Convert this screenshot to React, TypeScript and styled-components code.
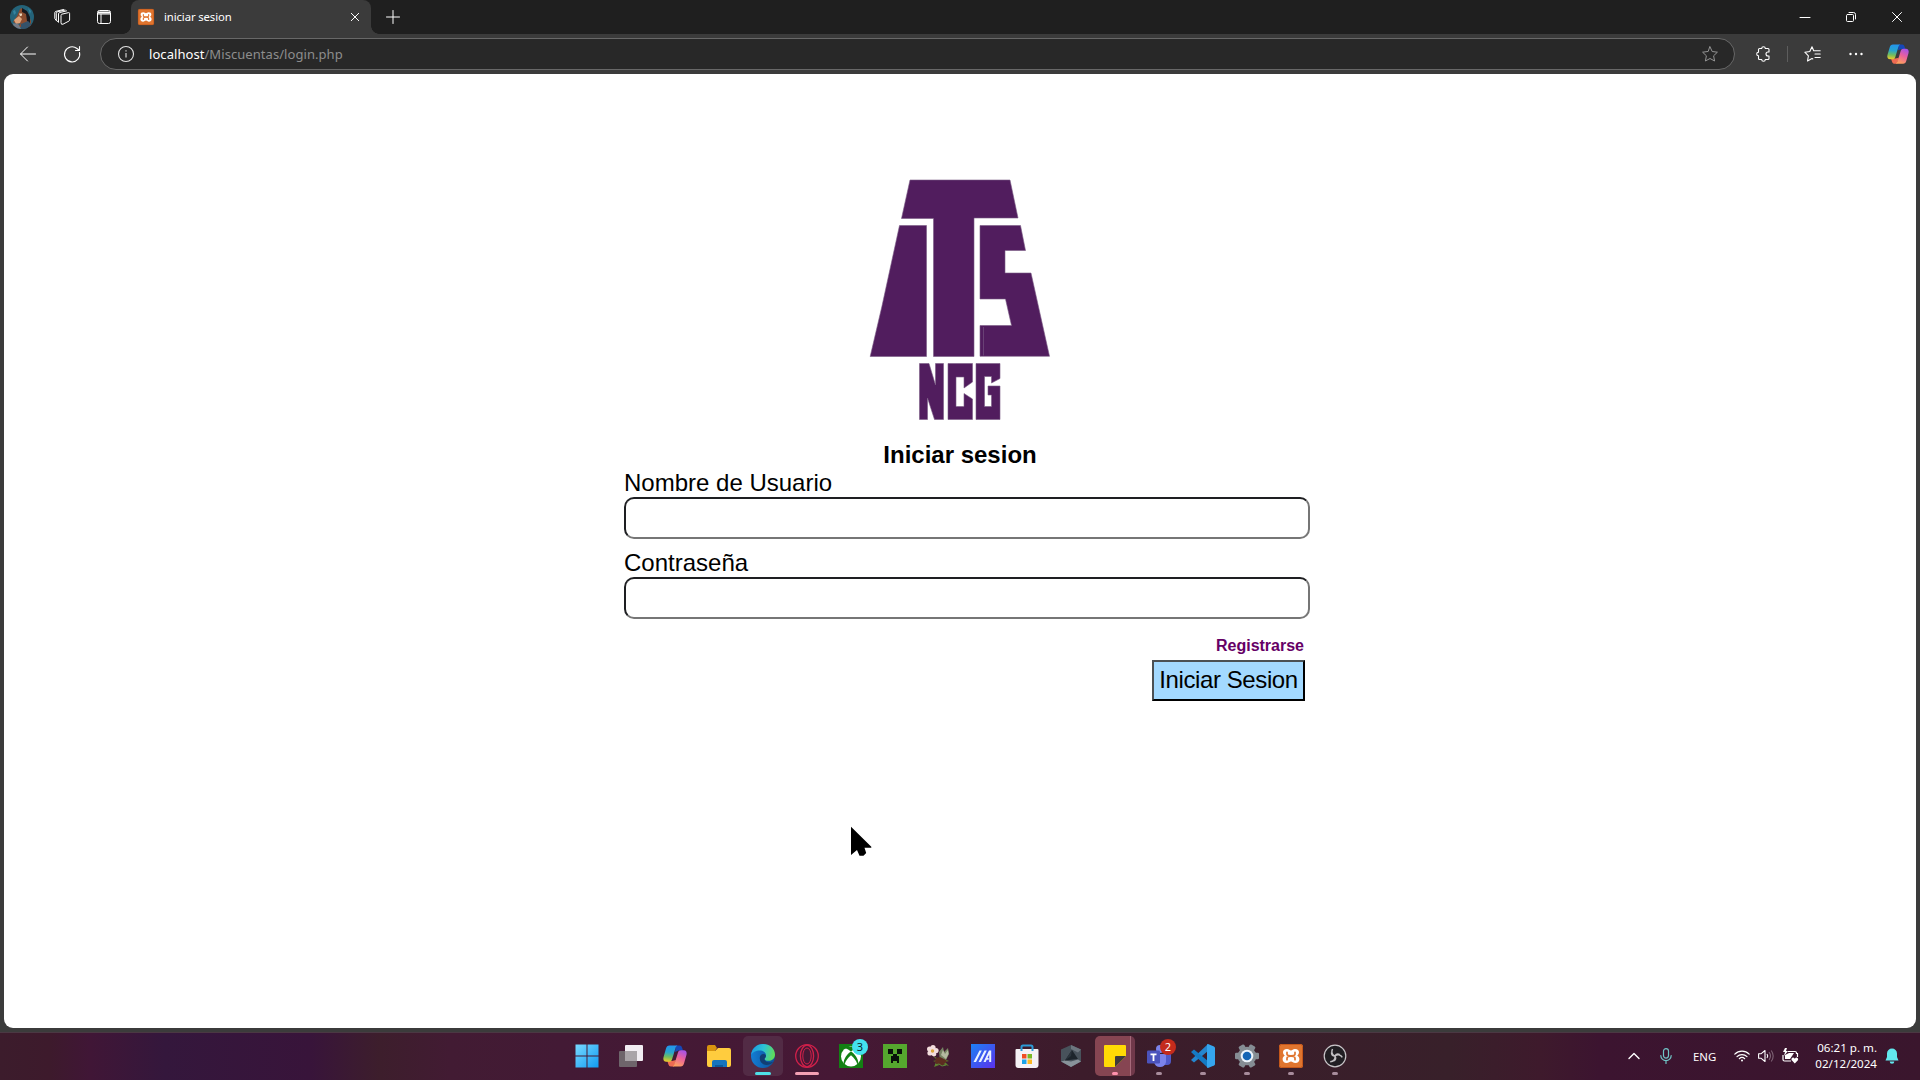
import React from "react";
import styled, { createGlobalStyle } from "styled-components";

const ui = '"Noto Sans", "Open Sans", sans-serif';

const Global = createGlobalStyle`
  * { box-sizing: border-box; }
  body { margin: 0; background: #3b3b3b; overflow: hidden; }
  svg { display: block; flex: none; overflow: visible; }
`;

const Desktop = styled.div`
  display: flex;
  flex-direction: column;
  width: 1920px;
  height: 1080px;
  background: #3b3b3b;
  font-family: ${ui};
`;

/* ---------- browser chrome ---------- */
const TabStrip = styled.header`
  display: flex;
  height: 34px;
  background: #1f1f1f;
  color: #fff;
`;
const StripTools = styled.div`
  display: flex;
  align-items: center;
  width: 131px;
  padding-left: 10px;
  gap: 20px;
`;
const Tab = styled.div`
  position: relative;
  display: flex;
  align-items: center;
  width: 240px;
  padding: 0 11px 0 7px;
  background: #3b3b3b;
  border-radius: 8px 8px 0 0;
  &::before, &::after {
    content: "";
    position: absolute;
    bottom: 0;
    width: 8px;
    height: 8px;
  }
  &::before { left: -8px; background: radial-gradient(circle at 0 0, #1f1f1f 7.5px, #3b3b3b 8px); }
  &::after { right: -8px; background: radial-gradient(circle at 100% 0, #1f1f1f 7.5px, #3b3b3b 8px); }
`;
const TabTitle = styled.span`
  flex: 1;
  margin-left: 10px;
  font-size: 11.3px;
  line-height: 16px;
  letter-spacing: -0.1px;
`;
const NewTab = styled.div`
  display: flex;
  align-items: center;
  flex: 1;
  padding-left: 14px;
`;
const WindowButtons = styled.div`
  display: flex;
  align-items: center;
  gap: 36px;
  padding-right: 18px;
`;
const Toolbar = styled.nav`
  display: flex;
  align-items: center;
  height: 40px;
  padding: 0 11px 0 20px;
  background: #3b3b3b;
  color: #fff;
`;
const NavButtons = styled.div`
  display: flex;
  align-items: center;
  gap: 27px;
  width: 80px;
`;
const Address = styled.div`
  display: flex;
  align-items: center;
  width: 1635px;
  height: 32px;
  padding: 0 16px 0 17px;
  border: 1px solid #686868;
  border-radius: 16px;
  background: #282828;
`;
const Url = styled.span`
  flex: 1;
  margin-left: 15px;
  font-size: 13px;
  line-height: 18px;
  letter-spacing: 0.06px;
  color: #8d8d8d;
  b { font-weight: 400; color: #fff; }
`;
const ToolbarActions = styled.div`
  display: flex;
  align-items: center;
  padding-left: 20px;
`;
const Divider = styled.i`
  width: 1px;
  height: 16px;
  margin: 0 16px;
  background: #5d5d5d;
`;
const MenuDots = styled.svg`
  margin: 0 23px 0 27px;
`;

/* ---------- page ---------- */
const Page = styled.main`
  display: flex;
  flex-direction: column;
  align-items: center;
  height: 954px;
  margin: 0 4px;
  padding-top: 106px;
  border-radius: 9px;
  background: #fff;
  color: #000;
  font-family: "Liberation Sans", Arial, sans-serif;
  font-size: 24px;
`;
const Title = styled.h1`
  margin: 21px 0 0;
  font-size: 24px;
  line-height: 28px;
`;
const Form = styled.form`
  display: flex;
  flex-direction: column;
  width: 672px;
`;
const Field = styled.label`
  display: flex;
  flex-direction: column;
  height: 80px;
  line-height: 28px;
`;
const Input = styled.input`
  width: 686px;
  height: 42px;
  border: 2px solid;
  border-color: #1e1f22 #767676 #767676 #1e1f22;
  border-radius: 10px;
  background: #fff;
  outline: none;
`;
const Actions = styled.div`
  display: flex;
  flex-direction: column;
  align-items: flex-end;
  width: 681px;
`;
const Register = styled.a`
  margin: 7px 1px 4px 0;
  font-size: 16px;
  line-height: 20px;
  font-weight: 700;
  color: #660066;
`;
const Submit = styled.button`
  width: 153px;
  height: 41px;
  padding: 0 0 2px;
  border: 2px solid;
  border-color: #4b5054 #000 #000 #4b5054;
  background: #a3d9ff;
  color: #000;
  font: 24px "Liberation Sans", Arial, sans-serif;
  letter-spacing: -0.4px;
`;
const Cursor = styled.svg`
  position: absolute;
  left: 850px;
  top: 826px;
`;

/* ---------- taskbar ---------- */
const Taskbar = styled.footer`
  display: grid;
  grid-template-columns: 565px 792px 1fr;
  height: 48px;
  margin-top: 4px;
  border-top: 1px solid #4b3843;
  background: linear-gradient(90deg, #3c1c2c 0, #3d1a2c 50px, #401636 90px, #34173c 165px, #38143a 310px, #3d1e2c 380px, #421b33 450px, #431a35 560px, #461835 840px, #3c1c2b 1080px, #38202a 1450px, #3e1a2c 1540px, #3c1430 1600px, #3a162d 100%);
  color: #fff;
`;
const Apps = styled.div`
  display: flex;
  grid-column: 2;
`;
const AppSlot = styled.div<{ $bg?: string }>`
  position: relative;
  display: flex;
  align-items: center;
  justify-content: center;
  width: 40px;
  height: 40px;
  margin: 3px 2px 0;
  border-radius: 5px;
  background: ${(p) => p.$bg || "transparent"};
`;
const Running = styled.i<{ $w: number; $c: string }>`
  position: absolute;
  bottom: 1px;
  left: ${(p) => 20 - p.$w / 2}px;
  width: ${(p) => p.$w}px;
  height: 3px;
  border-radius: 2px;
  background: ${(p) => p.$c};
`;
const Badge = styled.span<{ $bg: string; $fg: string }>`
  position: absolute;
  left: 21px;
  top: 3px;
  width: 16px;
  height: 16px;
  border-radius: 50%;
  background: ${(p) => p.$bg};
  color: ${(p) => p.$fg};
  font-size: 11px;
  line-height: 16px;
  text-align: center;
`;
const Tray = styled.div`
  display: flex;
  align-items: center;
  justify-content: flex-end;
  padding-right: 21px;
  padding-bottom: 1px;
`;
const TrayIcon = styled.svg<{ $gap: number }>`
  margin-left: ${(p) => p.$gap}px;
`;
const Lang = styled.span`
  margin: 2px 18px 0 21px;
  font-size: 11.4px;
  line-height: 16px;
`;
const Clock = styled.div`
  margin: 0 8px 0 16px;
  font-size: 11.6px;
  line-height: 16px;
  text-align: right;
  white-space: nowrap;
`;

const Line = ({ w = 16, h = 16, sw = 1, c = "#fff", d }: { w?: number; h?: number; sw?: number; c?: string; d: string }) => (
  <svg width={w} height={h} viewBox={`0 0 ${w} ${h}`} fill="none" stroke={c} strokeWidth={sw} strokeLinecap="round" strokeLinejoin="round">
    <path d={d} />
  </svg>
);
const TabActions = styled.svg`
  margin-left: 6px;
`;

const Xampp = ({ s }: { s: number }) => (
  <svg width={s} height={s} viewBox="0 0 24 24">
    <rect width="24" height="24" rx="2.5" fill="#e0752f" />
    <rect x=".5" y=".5" width="23" height="23" rx="2" fill="none" stroke="#c4571a" />
    <path d="M8 5c-2.800 0-4 1.300-4 3.300 0 1.600.9 2.500 1.800 3.300C4.600 12.500 3.600 13.600 3.600 15.300c0 2.200 1.600 3.700 3.900 3.700 2.300 0 3.200-1.600 4.500-1.600s2.200 1.600 4.500 1.600c2.300 0 3.900-1.500 3.900-3.700 0-1.700-1-2.800-2.200-3.700.9-.8 1.800-1.700 1.800-3.300 0-2-1.200-3.300-4-3.300-2.200 0-2.700 1.500-4 1.500S10.200 5 8 5z" fill="#fff" />
    <path d="M8 8.300v1.900c0 1.500 1.500 1.600 4 1.600s4-.1 4-1.600V8.300M8 15.700v-1.300c0-1.600 1.400-2.300 4-2.300s4 .7 4 2.300v1.300" fill="none" stroke="#e0752f" strokeWidth="1.700" strokeLinecap="round" />
  </svg>
);

const Copilot = ({ s, id }: { s: number; id: string }) => (
  <svg width={s} height={s} viewBox="0 0 24 24">
    <defs>
      <linearGradient id={id + "a"} x1=".4" y1="0" x2=".3" y2="1">
        <stop offset="0" stopColor="#2394ee" /><stop offset=".4" stopColor="#27a5cf" /><stop offset=".7" stopColor="#70bd60" /><stop offset="1" stopColor="#f0cb28" />
      </linearGradient>
      <linearGradient id={id + "b"} x1=".7" y1="0" x2=".3" y2="1">
        <stop offset="0" stopColor="#a653e8" /><stop offset=".45" stopColor="#e9609d" /><stop offset="1" stopColor="#ffa25c" />
      </linearGradient>
    </defs>
    <path d="M13 1.500h3.500c1.800 0 2.300 1.200 2.800 2.800l.7 2.300h-4.500L12 8z" fill="#1647b8" />
    <path d="M11 22.500H8c-1.900 0-2.300-1.200-2.800-2.800l-.8-2.700H9l4-1z" fill="#ee6b52" />
    <path d="M6.500 1.500h8c-1.300.5-1.700 1.600-2.200 3.200L9 15.500c-.5 1.500-1.300 2.300-3 2.300H3.500C.9 17.800-.2 15.800.5 13.200L3 4.500c.6-2 1.500-3 3.500-3z" fill={`url(#${id}a)`} />
    <path d="M17.500 22.500h-8c1.300-.5 1.700-1.600 2.200-3.200L15 8.500c.5-1.500 1.300-2.300 3-2.300h2.500c2.600 0 3.700 2 3 4.600L21 19.500c-.6 2-1.500 3-3.500 3z" fill={`url(#${id}b)`} />
  </svg>
);

const Avatar = () => (
  <svg width="24" height="24" viewBox="0 0 24 24">
    <clipPath id="av"><circle cx="12" cy="12" r="12" /></clipPath>
    <g clipPath="url(#av)">
      <rect width="24" height="24" fill="#246379" />
      <path d="M3 6l2-1 1 3-2 2zM18 3l3 3-1 3z" fill="#3484a0" />
      <path d="M10 4l2-1 2 3 4 2 3 8v6H8l3-4-4 1-4-2 4-6z" fill="#8a4c2f" />
      <path d="M12 3l5 3 3 6v7l-3-3-1-7-4-2z" fill="#17181e" />
      <path d="M4 15l5-4 3 3-2 4-4 1z" fill="#dda27a" />
      <path d="M9 8.500h3v2l-2 .8z" fill="#ecd8bd" />
      <path d="M3 18.500l5 0 3 5.500H4z" fill="#747985" />
      <path d="M11 19l7-3 4 4-3 4h-8z" fill="#34526a" />
    </g>
  </svg>
);

const Logo = () => (
  <svg width="180" height="240" viewBox="870 180 180 240" fill="#511d5e" stroke="#7b5a85" strokeWidth=".6">
    <path d="M910 180H1010L1018 218H974V356.500H933.500V218.500H901.500Z" />
    <path d="M899.500 225.500H926.500V356.500H870.200L882 306Z" />
    <path d="M980 225.500H1020.500L1025.500 250.500H1005V273H1031L1049.500 356.300H980V325.500H1011.500L1005.500 299H980Z" />
    <path d="M983.500 327V355.500" fill="none" />
    <path d="M919.500 363.500H929L935.500 385V363.500H943.500V419.500H934.500L927.500 398V419.500H919.500Z" />
    <path d="M948 363.500H972.500V382L964 388V377H956V406.500H964V393.500L972.500 399V419.500H948Z" />
    <path d="M976 363.500H1000V378.500L991.500 383V376.500H984.500V406.500H991.500V395H988V386H1000V419.500H976Z" />
  </svg>
);

const WindowsIcon = () => (
  <svg width="24" height="24" viewBox="0 0 24 24">
    <defs><linearGradient id="win" x1="0" y1="0" x2="1" y2="1"><stop stopColor="#78d9ff" /><stop offset="1" stopColor="#119bf2" /></linearGradient></defs>
    <path d="M.5.5h11v11H.5zM12.500.5h11v11h-11zM.5 12.500h11v11H.5zM12.500 12.500h11v11h-11z" fill="url(#win)" />
  </svg>
);
const TaskView = () => (
  <svg width="24" height="24" viewBox="0 0 24 24">
    <rect x="6" y="1" width="18" height="16" rx="1" fill="#f1edf2" />
    <rect x="0" y="7" width="18" height="16" rx="1" fill="#6e656b" />
    <rect x="6" y="7" width="12" height="10" fill="#a9a4a8" />
  </svg>
);
const Folder = () => (
  <svg width="26" height="24" viewBox="0 0 26 24">
    <path d="M1 3q0-2 2-2h6l2 3-2 3H1z" fill="#d8940e" />
    <path d="M1 7h8l3-3h11q2 0 2 2v15q0 2-2 2H3q-2 0-2-2z" fill="#ffcc3e" />
    <path d="M6 23v-5q0-2 2-2h11q2 0 2 2v5z" fill="#1674bd" />
    <path d="M9 23v-2h8v2z" fill="#0c5a99" />
  </svg>
);
const Edge = () => (
  <svg width="24" height="24" viewBox="0 0 24 24">
    <defs>
      <linearGradient id="e1" x1="0" x2="1" y1=".3" y2=".5"><stop stopColor="#1c9be0" /><stop offset=".5" stopColor="#2cc3d5" /><stop offset="1" stopColor="#62dc55" /></linearGradient>
      <linearGradient id="e2" x1="0" x2="1"><stop stopColor="#137dd3" /><stop offset="1" stopColor="#0c4f98" /></linearGradient>
    </defs>
    <circle cx="12" cy="12" r="12" fill="url(#e2)" />
    <path d="M0 11C.7 4.800 5.600 0 12 0c7 0 12 4.800 12 10.500 0 4-3 6.300-6.500 6.300-2.600 0-4-.8-4-1.800 0-.8 1.500-1.300 1.500-3.500C15 8.500 12.300 6.500 8.800 6.500 4.800 6.500 1.300 8.500 0 11z" fill="url(#e1)" />
    <path d="M8.800 13.500c-.5 4.500 3 7.500 6.500 7.500 3 0 5.500-1.200 7.200-3.200-1.500 1-8.500 1.200-9-2.800 0-1 1.500-1.300 1.500-3.500-2-2.500-5.800-1.500-6.200 2z" fill="#123f73" />
  </svg>
);
const Opera = () => (
  <svg width="24" height="24" viewBox="0 0 24 24" fill="none" stroke="#d0204a" strokeWidth="1.300">
    <circle cx="12" cy="12" r="11.300" />
    <ellipse cx="12" cy="12" rx="6.600" ry="10.800" />
    <ellipse cx="12" cy="12" rx="4.200" ry="8" strokeWidth="1" />
  </svg>
);
const Xbox = () => (
  <svg width="24" height="24" viewBox="0 0 24 24">
    <rect width="24" height="24" fill="#138013" />
    <circle cx="12" cy="12.500" r="10" fill="#fff" />
    <path d="M5 4.500c2.500-.5 5 1 7 3 2-2 4.500-3.500 7-3l-1.500-1.500h-11zM12 7.500c-4 2.500-7.500 7.500-7.300 12l1 .8C6.500 17 9 13.800 12 11.300c3 2.500 5.500 5.700 6.300 9l1-.8C19.500 15 16 10 12 7.500z" fill="#138013" />
  </svg>
);
const Creeper = () => (
  <svg width="24" height="24" viewBox="0 0 24 24">
    <rect width="24" height="24" fill="#55a82e" />
    <path d="M5 5h5v5H5zM14 5h5v5h-5zM10 10h4v2h2v7h-2v-2h-4v2H8v-7h2z" fill="#08110a" />
  </svg>
);
const Flower = () => (
  <svg width="24" height="24" viewBox="0 0 24 24">
    <path d="M12 8l4-5 1 5 4-4 1 6-4 8-5-1z" fill="#768463" />
    <path d="M16 6l2 4 3-4 .5 4-2.500 5-5-4z" fill="#b4baa0" />
    <path d="M6 12l6 3 5 0 5 2-4 1 4 4-7-2-8 3 2-5-3-1 4-1z" fill="#5d7f2b" />
    <path d="M9 14l4-1 4 2 3 2-4 4-6 0-2-3z" fill="#5d2d20" />
    <path d="M8 21l4-1 3 2 4-1" stroke="#5f8a3a" fill="none" />
    <g fill="#f3dddd"><circle cx="6" cy="3.500" r="2.600" /><circle cx="9" cy="6.500" r="2.600" /><circle cx="7" cy="10" r="2.400" /><circle cx="3" cy="9" r="2.600" /><circle cx="2.500" cy="5" r="2.500" /></g>
    <circle cx="5.500" cy="7" r="1.700" fill="#dda53c" />
  </svg>
);
const Armoury = () => (
  <svg width="24" height="24" viewBox="0 0 24 24">
    <defs><linearGradient id="asus" x1="0" x2="1" y2="1"><stop stopColor="#1c82f4" /><stop offset="1" stopColor="#5b31ec" /></linearGradient></defs>
    <rect width="24" height="24" fill="url(#asus)" />
    <path d="M2.500 18L8.500 6.500h2.300L5 18zM7.500 18l6-11.500h2.300L10 18zM12.500 18l5.500-11.500h2.200V18h-2v-7.500L16.500 14h1.200v1.800h-2L14.700 18z" fill="#eaf4ff" />
  </svg>
);
const Store = () => (
  <svg width="24" height="24" viewBox="0 0 24 24">
    <path d="M.5 6q0-1 1-1h21q1 0 1 1v15q0 3-3 3h-17q-3 0-3-3z" fill="#f5f2f5" />
    <path d="M6.500 7V3q0-1.500 1.500-1.500h8q1.500 0 1.500 1.500v4" fill="none" stroke="#2c9bd8" strokeWidth="2" />
    <path d="M7 10h4.500v4.500H7z" fill="#f04f24" /><path d="M12.500 10H17v4.500h-4.500z" fill="#7aba25" />
    <path d="M7 15.500h4.500V20H7z" fill="#1ba3e8" /><path d="M12.500 15.500H17V20h-4.500z" fill="#fcb823" />
  </svg>
);
const Hexagon = () => (
  <svg width="22" height="24" viewBox="0 0 22 24">
    <path d="M11 1l10 4.500v12L11 23 1 17.500v-12z" fill="#48525b" />
    <path d="M11 1l10 4.500-3 3L11 5z" fill="#6d767f" /><path d="M1 17.500L11 23l10-5.500-3-2-7 2-6-1z" fill="#88929a" />
    <path d="M12 6l6 9-13 1.500z" fill="#1d252c" />
    <path d="M12 6l-1 6-6 4.500z" fill="#2c353d" />
  </svg>
);
const Sticky = () => (
  <svg width="22" height="22" viewBox="0 0 22 22">
    <path d="M0 1q0-1 1-1h20q1 0 1 1v10L11 22H1q-1 0-1-1z" fill="#ffda05" />
    <path d="M11 12q0-1 1-1h10L11 22z" fill="#3e3b3b" />
  </svg>
);
const Teams = () => (
  <svg width="24" height="24" viewBox="0 0 24 24">
    <circle cx="20" cy="7" r="3" fill="#5059c9" /><circle cx="13" cy="5" r="4" fill="#7b83eb" />
    <path d="M17 10h7v7q0 4-4 4h-3z" fill="#5059c9" />
    <path d="M7 10h12v8q-1 5-6 5t-6-5z" fill="#7b83eb" />
    <rect x="0" y="6.500" width="13" height="13" rx="1.200" fill="#4b53bc" />
    <path d="M3.500 9.500h6v1.700H7.400V17H5.600v-5.800H3.500z" fill="#fff" />
  </svg>
);
const VsCode = () => (
  <svg width="24" height="24" viewBox="0 0 24 24">
    <path d="M17 0v7L3 18.500 0 16z" fill="#2586ce" />
    <path d="M0 8l3-2.500L17 17v7z" fill="#147ac4" />
    <path d="M17 0l6 2.500q1 .5 1 1.500v16q0 1-1 1.500L17 24q-1 0-1-1V1q0-1 1-1z" fill="#35a5ee" />
  </svg>
);
const Gear = () => (
  <svg width="24" height="24" viewBox="0 0 24 24">
    <circle cx="12" cy="12" r="9.300" fill="#858d94" />
    {[30, 90, 150].map((a) => (
      <rect key={a} x="8.800" y="0" width="6.400" height="24" rx="1.200" fill="#858d94" transform={`rotate(${a} 12 12)`} />
    ))}
    <circle cx="12" cy="12" r="6.300" fill="#edf4fb" /><circle cx="12" cy="12" r="4.300" fill="#1565b5" />
  </svg>
);
const Obs = () => (
  <svg width="24" height="24" viewBox="0 0 24 24">
    <circle cx="12" cy="12" r="10.800" fill="#211e23" stroke="#c9c5c9" strokeWidth="1.200" />
    {[0, 120, 240].map((a) => (
      <path key={a} d="M12 12c-3-1-4-4-2.500-7M12 12c-2 0-3.500-1.500-3.500-3.500" fill="none" stroke="#c3c0c4" strokeWidth="1.500" transform={`rotate(${a} 12 12)`} />
    ))}
  </svg>
);

type AppItem = { icon: React.ReactNode; run?: [number, string]; bg?: string; badge?: [string, string, string] };
const idle: [number, string] = [6, "#a88c9c"];
const apps: AppItem[] = [
  { icon: <WindowsIcon /> },
  { icon: <TaskView /> },
  { icon: <Copilot s={24} id="task" /> },
  { icon: <Folder /> },
  { icon: <Edge />, bg: "#522b45", run: [16, "#4fe0e8"] },
  { icon: <Opera />, run: [24, "#f4a0b4"] },
  { icon: <Xbox />, badge: ["3", "#44e2ee", "#08242a"] },
  { icon: <Creeper /> },
  { icon: <Flower /> },
  { icon: <Armoury /> },
  { icon: <Store /> },
  { icon: <Hexagon /> },
  { icon: <Sticky />, bg: "linear-gradient(90deg, #864552 0 35px, #a6697a 35px 36px, #70384a 36px)", run: [6, "#ff91ad"] },
  { icon: <Teams />, run: idle, badge: ["2", "#c42b1c", "#fff"] },
  { icon: <VsCode />, run: idle },
  { icon: <Gear />, run: idle },
  { icon: <Xampp s={24} />, run: idle },
  { icon: <Obs />, run: idle },
];

export default function App() {
  return (
    <Desktop>
      <Global />
      <TabStrip>
        <StripTools>
          <Avatar />
          <Line w={16} h={16} d="M7 6.200Q7 5.400 7.800 5.200L14.600 3.600Q15.600 3.500 15.600 4.500V11Q15.600 11.700 15 12L9 15.200Q7 16 7 14ZM4.500 13V5Q4.500 3.900 5.500 3.600L12.500 1.900M2.300 11.500L.8 9.500V3.800Q.8 2.700 1.800 2.400L9.500 .5M4.500 13L2.300 11.500V4.200Q2.300 3.200 3.300 2.900L11 1" />
          <TabActions width="16" height="16" viewBox="0 0 16 16" fill="none" stroke="#fff">
            <rect x="1.500" y="1.500" width="13" height="13" rx="2" /><path d="M5 5v9M2 5h12" /><path d="M2 3.500h12" strokeWidth="2" />
          </TabActions>
        </StripTools>
        <Tab>
          <Xampp s={16} />
          <TabTitle>iniciar sesion</TabTitle>
          <Line w={10} h={10} d="M1.300 1.300L8.700 8.700M8.700 1.300L1.300 8.700" />
        </Tab>
        <NewTab><Line w={16} h={16} d="M1.500 8H14.500M8 1.500V14.500" /></NewTab>
        <WindowButtons>
          <Line w={10} h={10} d="M0 5.500H10" />
          <Line w={10} h={10} d="M1.500 2.500H6.500Q7.500 2.500 7.500 3.500V8.500Q7.500 9.500 6.500 9.500H1.500Q.5 9.500 .5 8.500V3.500Q.5 2.500 1.500 2.500M3 .5H7.500Q9.500 .5 9.500 2.500V7" />
          <Line w={10} h={10} d="M.5 .5L9.500 9.500M9.500 .5L.5 9.500" />
        </WindowButtons>
      </TabStrip>
      <Toolbar>
        <NavButtons>
          <Line w={16} h={16} d="M15.500 8H.8M7.500 1L.5 8L7.500 15" />
          <Line w={18} h={18} sw={1.1} d="M16.500 7.500A7.600 7.600 0 1 1 14 3.500L16.500 5.500M16.500 1.500V5.500H12.500" />
        </NavButtons>
        <Address>
          <svg width="16" height="16" viewBox="0 0 16 16" fill="none" stroke="#e2e2e2" strokeWidth="1.100">
            <circle cx="8" cy="8" r="7.500" /><path d="M8 7v4.500M8 4.300v1.300" />
          </svg>
          <Url><b>localhost</b>/Miscuentas/login.php</Url>
          <Line w={16} h={16} c="#949494" d="M8 .8L10.200 5.500L15.400 6.200L11.600 9.800L12.600 15L8 12.500L3.400 15L4.400 9.800L.6 6.200L5.800 5.500Z" />
        </Address>
        <ToolbarActions>
          <Line w={16} h={16} sw={1.1} d="M4.500 2.500H6.700A1.800 1.800 0 0 1 10.300 2.500H13Q14 2.500 14 3.500V6H13A2 2 0 0 0 13 10H14V12.500Q14 13.500 13 13.500H10.300A1.800 1.800 0 0 1 6.700 13.500H4.500Q3.500 13.500 3.500 12.500V9.800A1.800 1.800 0 0 1 3.500 6.200V3.500Q3.500 2.500 4.500 2.500Z" />
          <Divider />
          <Line w={17} h={16} sw={1.1} d="M9.700 4.700L8 .8L5.800 5.500L.8 6.200L4.400 9.800L3.500 15L8 12.500L8.800 13M9.700 4.700H16.200M11 8H16.200M11 11.500H16.200" />
          <MenuDots width="16" height="16" viewBox="0 0 16 16" fill="#fff"><circle cx="2.500" cy="8" r="1.200" /><circle cx="8" cy="8" r="1.200" /><circle cx="13.500" cy="8" r="1.200" /></MenuDots>
          <Copilot s={22} id="bar" />
        </ToolbarActions>
      </Toolbar>
      <Page>
        <Logo />
        <Title>Iniciar sesion</Title>
        <Form>
          <Field>Nombre de Usuario<Input type="text" /></Field>
          <Field>Contraseña<Input type="password" /></Field>
          <Actions>
            <Register>Registrarse</Register>
            <Submit type="button">Iniciar Sesion</Submit>
          </Actions>
        </Form>
      </Page>
      <Taskbar>
        <Apps>
          {apps.map((a, i) => (
            <AppSlot key={i} $bg={a.bg}>
              {a.icon}
              {a.run && <Running $w={a.run[0]} $c={a.run[1]} />}
              {a.badge && <Badge $bg={a.badge[1]} $fg={a.badge[2]}>{a.badge[0]}</Badge>}
            </AppSlot>
          ))}
        </Apps>
        <Tray>
          <Line w={12} h={8} sw={1.400} d="M1 6.500L6 1.500L11 6.500" />
          <TrayIcon $gap={20} width="12" height="16" viewBox="0 0 12 16" fill="none" stroke="#71c5c7" strokeWidth="1.200" strokeLinecap="round">
            <rect x="3.500" y=".6" width="5" height="9.500" rx="2.500" /><path d="M.8 7.500a5.200 5.200 0 0 0 10.400 0M6 12.700v2.700" />
          </TrayIcon>
          <Lang>ENG</Lang>
          <svg width="16" height="12" viewBox="0 0 16 12" fill="none" stroke="#fff" strokeWidth="1.200" strokeLinecap="round">
            <path d="M.8 4.200a10.200 10.200 0 0 1 14.400 0M3 6.600a7.100 7.100 0 0 1 10 0M5.300 8.700a3.900 3.900 0 0 1 5.400 0" /><circle cx="8" cy="10.600" r="1" fill="#fff" stroke="none" />
          </svg>
          <TrayIcon $gap={8} width="16" height="14" viewBox="0 0 16 14" fill="none" stroke="#fff" strokeWidth="1.100" strokeLinejoin="round">
            <path d="M.6 4.700h2.600L7 1.500v11L3.200 9.300H.6zM9 5q1.500 2 0 4" /><path d="M11 3.200q3 3.800 0 7.600M13.200 1.500q4 5.500 0 11" stroke="#7e6375" />
          </TrayIcon>
          <TrayIcon $gap={8} width="17" height="16" viewBox="0 0 17 16" fill="none" stroke="#fff" strokeWidth="1.200">
            <path d="M6 3.500h7q1.500 0 1.500 1.500v.5h1V9M1 7v4.500Q1 13 2.500 13H9" /><path d="M3 7l4-2h5l-4 6H3z" fill="#fff" stroke="none" /><path d="M3 0L1 4h2l-1 4 4-5H4l1-3z" fill="#fff" stroke="none" />
            <path d="M12.800 15.500L9.500 12q-.5-2 1.300-2.500 1.300 0 2 1.200.7-1.200 2-1.200 1.800.5 1.300 2.500z" fill="#fff" stroke="none" />
          </TrayIcon>
          <Clock>06:21 p. m.<br />02/12/2024</Clock>
          <svg width="14" height="16" viewBox="0 0 14 16" fill="#62e8ee"><path d="M7 .5a5 5 0 0 0-5 5V9L.5 12.500h13L12 9V5.500a5 5 0 0 0-5-5zM4.700 13.500h4.600a2.300 2.300 0 0 1-4.600 0z" /></svg>
        </Tray>
      </Taskbar>
      <Cursor width="22" height="32" viewBox="0 0 22 32"><path d="M1 .7L21.300 20.800V21.700H14.500L16.200 27L13.500 29.700H9.500L7 24L1 29Z" fill="#000" /></Cursor>
    </Desktop>
  );
}
